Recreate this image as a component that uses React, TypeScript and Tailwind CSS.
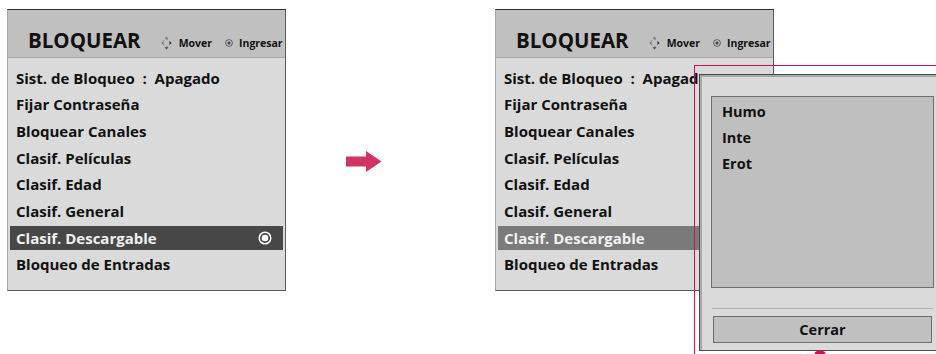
import React from 'react'

const items = [
    'Sist. de Bloqueo : Apagado',
    'Fijar Contraseña',
    'Bloquear Canales',
    'Clasif. Películas',
    'Clasif. Edad',
    'Clasif. General',
    'Clasif. Descargable',
    'Bloqueo de Entradas',
]

const font = { fontFamily: '"Open Sans", "Noto Sans", sans-serif' }

function MoveIcon() {
    return (
        <svg width="11" height="14" viewBox="0 0 11 14" className="mr-[7px]">
            <circle cx="5.5" cy="7" r="3.6" fill="none" stroke="#8a8a8a" strokeWidth="0.9" strokeDasharray="2 2" />
            <path d="M5.5 0.5 L7.5 2.8 L3.5 2.8 Z" fill="#777" />
            <path d="M5.5 13.5 L7.5 11.2 L3.5 11.2 Z" fill="#444" />
            <path d="M0.3 7 L2.5 5.2 L2.5 8.8 Z" fill="#777" />
            <path d="M10.7 7 L8.5 5.2 L8.5 8.8 Z" fill="#222" />
        </svg>
    )
}

function EnterIcon({ color = '#444', size = 8 }: { color?: string; size?: number }) {
    return (
        <svg width={size} height={size} viewBox="0 0 8 8">
            <circle cx="4" cy="4" r="3.4" fill="none" stroke={color} strokeWidth="0.8" />
            <circle cx="4" cy="4" r="1.5" fill={color} />
        </svg>
    )
}

function Panel({ active }: { active: 'dark' | 'light' }) {
    return (
        <div className="w-[279px] h-[282px] shrink-0 flex flex-col overflow-hidden border-t border-t-[#2a2a2a] border-r border-r-[#5a5a5a] border-b border-b-[#5a5a5a] border-l border-l-[#a8a8a8]">
            {/* header */}
            <div className="h-[48px] shrink-0 bg-[#c0c0c0] border-b border-b-[#a6a6a6] flex items-end pb-[6px] pl-[20px] whitespace-nowrap">
                <span className="text-[20.5px] font-bold text-[#111] leading-none mr-[20px] mb-[1px]">BLOQUEAR</span>
                <div className="flex items-center mb-[1px]">
                    <MoveIcon />
                    <span className="text-[10.5px] font-bold text-[#111] leading-none">Mover</span>
                    <span className="ml-[13px] mr-[6px] flex items-center">
                        <EnterIcon />
                    </span>
                    <span className="text-[10.5px] font-bold text-[#111] leading-none">Ingresar</span>
                </div>
            </div>

            {/* body */}
            <div className="flex-1 bg-[#dadada] pt-[8px] px-[2px] flex flex-col gap-[2.67px]">
                {items.map((label, i) => {
                    const on = i === 6
                    const bg = on ? (active === 'dark' ? 'bg-[#474747] text-[#f0f0f0]' : 'bg-[#7a7a7a] text-[#f2f2f2]') : 'text-[#111]'
                    return (
                        <div key={label} className={`h-[24px] shrink-0 flex items-center justify-between pl-[6px] pr-[11px] text-[15px] font-bold whitespace-nowrap ${bg}`}>
                            <span className="whitespace-pre">{i === 0 ? 'Sist. de Bloqueo  :  Apagado' : label}</span>
                            {on && active === 'dark' && (
                                <svg width="14" height="14" viewBox="0 0 14 14">
                                    <circle cx="7" cy="7" r="5.8" fill="none" stroke="#fff" strokeWidth="1.5" />
                                    <circle cx="7" cy="7" r="3.3" fill="#fff" />
                                </svg>
                            )}
                        </div>
                    )
                })}
            </div>
        </div>
    )
}

export default function App() {
    return (
        <div className="relative w-[936px] h-[354px] bg-white overflow-hidden flex items-start pt-[9px] pl-[7px]" style={font}>
            <Panel active="dark" />

            {/* Arrow */}
            <div className="w-[209px] shrink-0 pl-[60px] pt-[142px]">
                <svg width="36" height="21" viewBox="0 0 36 21">
                    <path d="M0 5.5 H20 V0 L35.5 10.5 L20 21 V15.5 H0 Z" fill="#cf3462" />
                </svg>
            </div>

            <Panel active="light" />

            {/* Callout frame */}
            <div className="absolute left-[694px] top-[65px] w-[260px] h-[320px] border-[1.5px] border-[#d0105f]" />

            {/* Popup */}
            <div className="absolute left-[699px] top-[74px] w-[240px] h-[277px] bg-[#dadada] border border-[#4c4c4c] shadow-[inset_2px_2px_0_#a8a8a8] pl-[11px] pt-[21px] flex flex-col">
                <div className="w-[223px] h-[192px] bg-[#bfbfbf] border border-[#6e6e6e] pt-[2px] pl-[10px] flex flex-col">
                    {['Humo', 'Inte', 'Erot'].map((t) => (
                        <div key={t} className="h-[26px] flex items-center text-[14.5px] font-bold text-[#111]">
                            {t}
                        </div>
                    ))}
                </div>
                <div className="w-[221px] ml-[1px] mt-[20px] h-px bg-[#b0b0b0]" />
                <div className="w-[219px] ml-[2px] mt-[7px] h-[27px] bg-[#c0c0c0] border border-[#6e6e6e] flex items-center justify-center text-[14.5px] font-bold text-[#111]">
                    Cerrar
                </div>
            </div>

            {/* Pointer dot */}
            <div className="absolute left-[814px] top-[350px] w-[12px] h-[12px] rounded-full bg-[#d0105f]" />
        </div>
    )
}
